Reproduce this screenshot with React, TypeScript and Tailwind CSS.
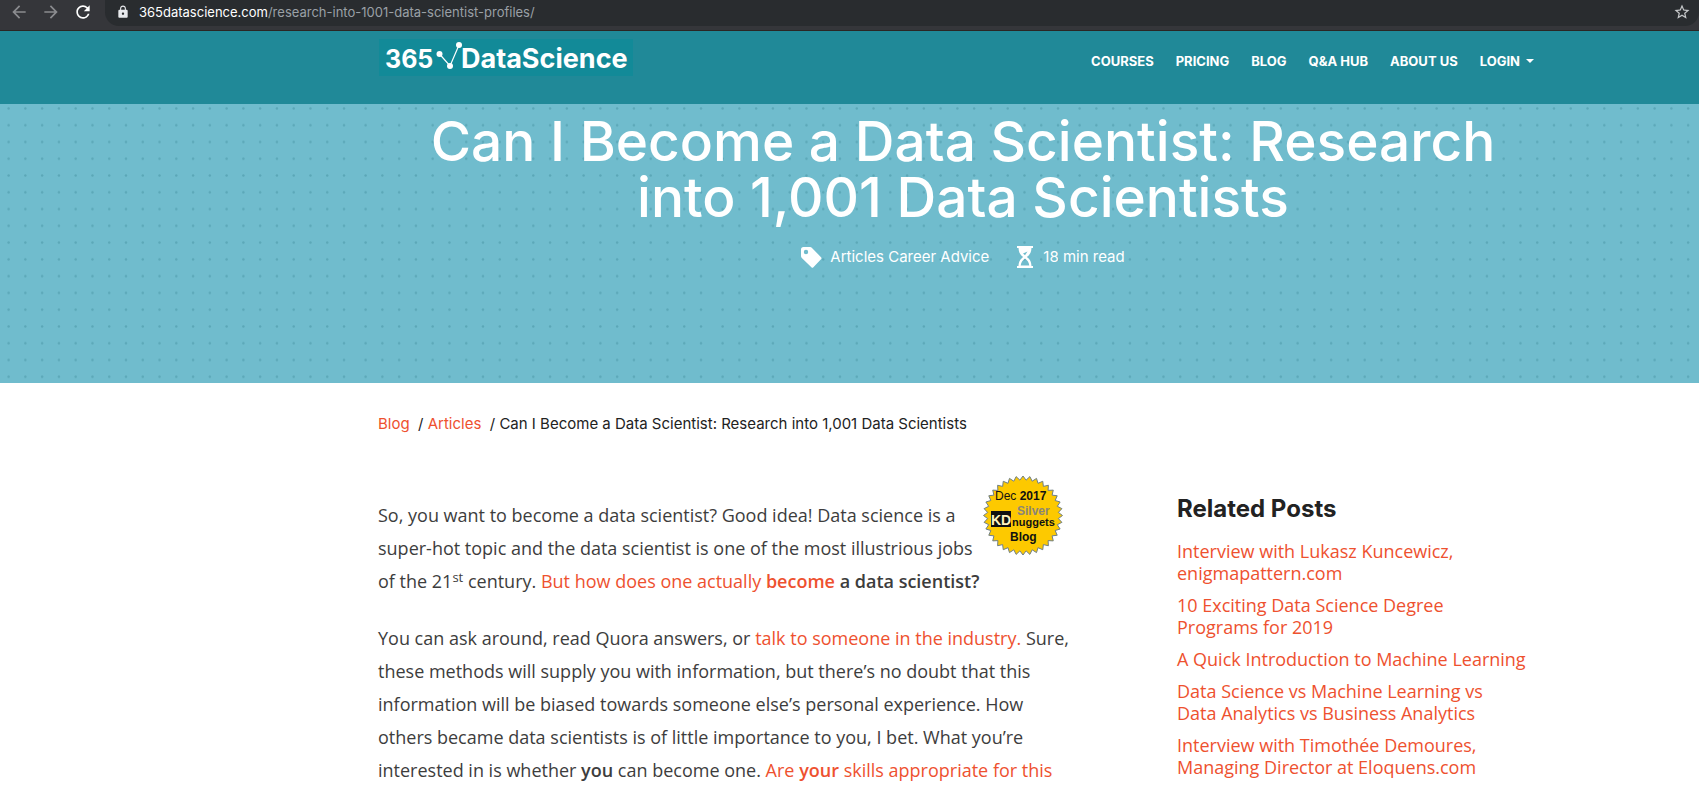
import type { ReactNode } from "react";
import { MdArrowBack, MdArrowForward, MdLock, MdRefresh, MdStarBorder } from "react-icons/md";

const LINK = "text-[#ee512f]";

function BrowserBar() {
  return (
    <div className="flex h-[31px] items-start border-b border-[#2b2624] bg-[#35363a] font-['Inter',sans-serif]">
      <div className="flex h-6 shrink-0 items-center gap-3 pl-[9px]">
        <button type="button" aria-label="Back" className="text-[#8b8c8f]">
          <MdArrowBack size={20} />
        </button>
        <button type="button" aria-label="Forward" className="text-[#8b8c8f]">
          <MdArrowForward size={20} />
        </button>
        <button type="button" aria-label="Reload" className="text-white">
          <MdRefresh size={20} />
        </button>
      </div>
      <div className="ml-3 flex h-[26px] grow items-center rounded-b-[14px] bg-[#292c2f] pr-2 pb-[2px] pl-[11px]">
        <MdLock size={14} className="shrink-0 text-[#e8eaed]" />
        <div className="ml-[9px] grow text-[13px] leading-5 text-[#9aa0a6]">
          <span className="text-white">365datascience.com</span>/research-into-1001-data-scientist-profiles/
        </div>
        <button type="button" aria-label="Bookmark" className="text-[#c6c8ca]">
          <MdStarBorder size={18} />
        </button>
      </div>
    </div>
  );
}

function Logo() {
  return (
    <a href="#home" aria-label="365 Data Science" className="block bg-[#128a98]">
      <svg width="254" height="37" viewBox="0 0 254 37" className="block">
        <g fill="#fff" fontFamily="Inter, sans-serif" fontWeight="700">
          <text x="6" y="29" fontSize="25">365</text>
          <text x="82" y="29" fontSize="27">DataScience</text>
        </g>
        <path d="M60.500 15 71 27 80 6" fill="none" stroke="#fff" strokeWidth="1.200" />
        <g fill="#fff">
          <circle cx="60.500" cy="15" r="3" />
          <circle cx="71" cy="27" r="3" />
          <circle cx="80" cy="6" r="3" />
        </g>
      </svg>
    </a>
  );
}

function Header() {
  return (
    <header className="flex h-[73px] items-start justify-between bg-[#208998] pt-2 pr-[165px] pl-[379px]">
      <Logo />
      <nav className="flex items-center gap-[22px] pt-3 font-['Inter',sans-serif] text-[13px] leading-5 font-bold whitespace-nowrap text-white">
        <a href="#courses">COURSES</a>
        <a href="#pricing">PRICING</a>
        <a href="#blog">BLOG</a>
        <a href="#qa">Q&amp;A HUB</a>
        <a href="#about">ABOUT US</a>
        <a href="#login" className="flex items-center gap-[6px]">
          LOGIN
          <svg width="8" height="4" viewBox="0 0 8 4" fill="#fff">
            <path d="M0 0h8L4 4z" />
          </svg>
        </a>
      </nav>
    </header>
  );
}

const DOTS = Array.from({ length: 21 }, (_, i) => 11.6 + i * 16.77);

function Hero() {
  return (
    <section className="relative h-[279px] bg-[#70bccd] text-white">
      <svg className="absolute inset-0 h-full w-full" aria-hidden="true">
        <defs>
          <pattern id="dots" x="-3" y="0" width="357" height="16.77" patternUnits="userSpaceOnUse">
            {DOTS.map((x) => (
              <circle key={x} cx={x} cy="4.500" r="1.250" fill="#5ba7b7" />
            ))}
          </pattern>
        </defs>
        <rect width="100%" height="100%" fill="url(#dots)" />
      </svg>
      <div className="relative flex flex-col items-center pt-[9px] pr-[151px] pl-[378px] font-['Inter',sans-serif]">
        <h1 className="text-center text-[55px] leading-14 font-medium">
          Can I Become a Data Scientist: Research
          <br />
          into 1,001 Data Scientists
        </h1>
        <div className="mt-5 flex items-center text-[15px] leading-6">
          <svg width="21" height="21" viewBox="0 0 21 21" fill="#fff">
            <path
              fillRule="evenodd"
              d="M2.500 0H9q1.200 0 2 .9l9 9.300q1 1 0 2l-7.600 8q-1 1-2 0L.8 11Q0 10.200 0 9V2.500Q0 0 2.500 0zM5 2.800a2.200 2.200 0 1 0 0 4.400 2.200 2.200 0 0 0 0-4.400z"
            />
          </svg>
          <span className="ml-2">Articles Career Advice</span>
          <svg width="16" height="22" viewBox="0 0 16 22" fill="#fff" className="ml-7">
            <path d="M0 0h16v2H0zM0 20h16v2H0z" />
            <path
              fillRule="evenodd"
              d="M1.500 1.500h13c0 5-2 7.500-4.700 9.500 2.700 2 4.700 4.500 4.700 9.500h-13c0-5 2-7.500 4.700-9.500C3.500 9 1.500 6.500 1.500 1.500zM8 12.500c-2.500 1.800-4 4-4.300 7h8.600c-.3-3-1.800-5.200-4.300-7z"
            />
            <path d="m6 7.500 4.500-2-2.500 3.700z" fill="#70bccd" />
          </svg>
          <span className="ml-[10px]">18 min read</span>
        </div>
      </div>
    </section>
  );
}

const TEETH = 36;
const BURST = Array.from({ length: TEETH * 2 }, (_, i) => {
  const r = i % 2 === 0 ? 39.5 : 35.5;
  const a = (i * Math.PI) / TEETH;
  return `${(40 + r * Math.sin(a)).toFixed(2)},${(40.5 - r * Math.cos(a)).toFixed(2)}`;
}).join(" ");

function Badge() {
  return (
    <svg
      width="80"
      height="81"
      viewBox="0 0 80 81"
      role="img"
      aria-label="KDnuggets silver blog, December 2017"
      className="float-right mr-[7px]"
      fontFamily="Liberation Sans, sans-serif"
    >
      <polygon points={BURST} fill="#fdc900" stroke="#6f7f84" strokeWidth="1" />
      <text x="12" y="25" fontSize="12" fill="#111">
        Dec <tspan fontWeight="700">2017</tspan>
      </text>
      <text x="34" y="39.500" fontSize="12" fontWeight="700" fill="#8a8578">Silver</text>
      <rect x="8" y="36" width="20" height="16" fill="#111" />
      <text x="8" y="50" fontSize="14" fontWeight="700" fill="#fff3c0">KD</text>
      <text x="29" y="51" fontSize="11" fontWeight="700" fill="#111">nuggets</text>
      <text x="27" y="66" fontSize="12" fontWeight="700" fill="#111">Blog</text>
    </svg>
  );
}

function A({ children }: { children: ReactNode }) {
  return (
    <a href="#article" className={LINK}>
      {children}
    </a>
  );
}

const RELATED = [
  "Interview with Lukasz Kuncewicz,\nenigmapattern.com",
  "10 Exciting Data Science Degree\nPrograms for 2019",
  "A Quick Introduction to Machine Learning",
  "Data Science vs Machine Learning vs\nData Analytics vs Business Analytics",
  "Interview with Timothée Demoures,\nManaging Director at Eloquens.com",
];

export default function App() {
  return (
    <div className="h-screen overflow-hidden bg-white">
      <BrowserBar />
      <Header />
      <Hero />
      <div className="pr-[151px] pl-[378px]">
        <div className="pt-[29px] font-['Inter',sans-serif] text-[15px] leading-6 text-[#222]">
          <A>Blog</A> &nbsp;/ <A>Articles</A> &nbsp;/ Can I Become a Data Scientist: Research into 1,001 Data Scientists
        </div>
        <div className="flex items-start gap-[107px] pt-[39px]">
          <article className="w-[692px] shrink-0 font-['Open_Sans',sans-serif] text-[18px] leading-[33px] text-[#3d3d3d]">
            <Badge />
            <p className="pt-6">
              So, you want to become a data scientist? Good idea! Data science is a
              <br />
              super-hot topic and the data scientist is one of the most illustrious jobs
              <br />
              of the 21<sup className="text-[13px]">st</sup> century.{" "}
              <A>
                But how does one actually <b className="font-semibold">become</b>
              </A>{" "}
              <b className="font-semibold">a data scientist?</b>
            </p>
            <p className="pt-6">
              You can ask around, read Quora answers, or <A>talk to someone in the industry.</A> Sure,
              <br />
              these methods will supply you with information, but there’s no doubt that this
              <br />
              information will be biased towards someone else’s personal experience. How
              <br />
              others became data scientists is of little importance to you, I bet. What you’re
              <br />
              interested in is whether <b className="font-semibold">you</b> can become one.{" "}
              <A>
                Are <b className="font-semibold">your</b> skills appropriate for this
              </A>
            </p>
          </article>
          <aside className="max-w-[358px] pt-[18px]">
            <h2 className="font-['Inter',sans-serif] text-2xl leading-8 font-bold text-[#222]">Related Posts</h2>
            <ul className="flex flex-col gap-[10px] pt-[15px] font-['Open_Sans',sans-serif] text-[18px] leading-[22px] whitespace-pre-line">
              {RELATED.map((title) => (
                <li key={title}>
                  <A>{title}</A>
                </li>
              ))}
            </ul>
          </aside>
        </div>
      </div>
    </div>
  );
}
